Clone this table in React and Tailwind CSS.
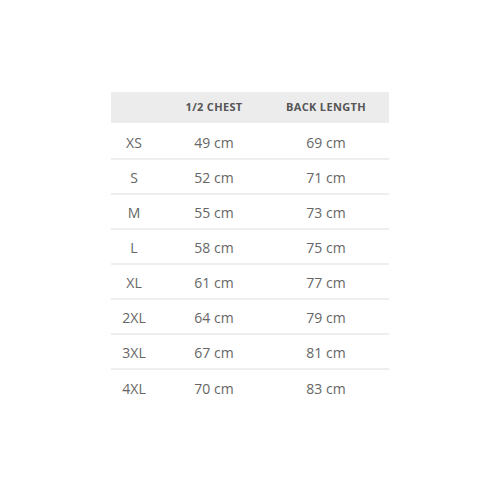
const rows = [
  ["XS", "49 cm", "69 cm"],
  ["S", "52 cm", "71 cm"],
  ["M", "55 cm", "73 cm"],
  ["L", "58 cm", "75 cm"],
  ["XL", "61 cm", "77 cm"],
  ["2XL", "64 cm", "79 cm"],
  ["3XL", "67 cm", "81 cm"],
  ["4XL", "70 cm", "83 cm"],
];

export default function App() {
  return (
    <div className="w-[500px] h-[500px] bg-white pt-[92px] pl-[111px]" style={{ fontFamily: '"Open Sans", sans-serif' }}>
      <table className="w-[278px] border-collapse text-center">
        <thead>
          <tr className="bg-[#ececec] h-[32px] border-b-2 border-white">
            <th className="w-[46px]"></th>
            <th className="w-[114px] text-[11px] font-bold text-[#555] tracking-[0.03em]">1/2 CHEST</th>
            <th className="pr-2 text-[11px] font-bold text-[#555] tracking-[0.03em]">BACK LENGTH</th>
          </tr>
        </thead>
        <tbody>
          {rows.map((r, i) => (
            <tr key={r[0]} className={"h-[35px] text-[14px] text-[#666] " + (i < rows.length - 1 ? "border-b-2 border-[#eeeeee]" : "border-t-2 border-[#eeeeee]")}>
              <td className="pt-[2px]">{r[0]}</td>
              <td className="pt-[2px]">{r[1]}</td>
              <td className="pt-[2px] pr-2">{r[2]}</td>
            </tr>
          ))}
        </tbody>
      </table>
    </div>
  );
}
